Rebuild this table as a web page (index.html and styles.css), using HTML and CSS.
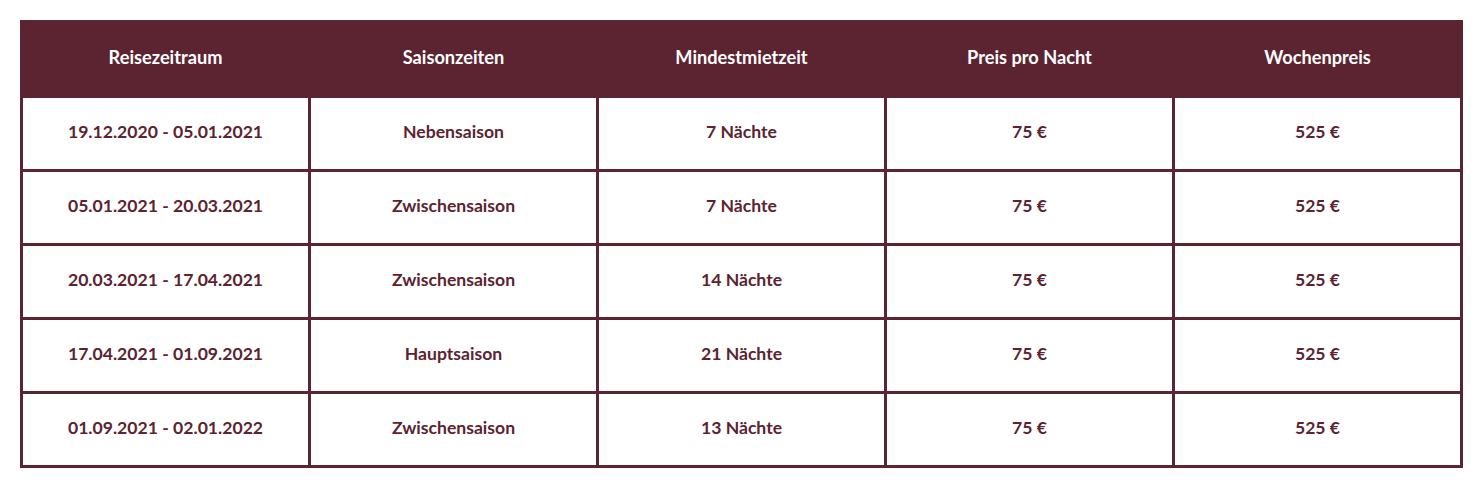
FILE: index.html
```html
<!DOCTYPE html>
<html lang="de">
<head>
<meta charset="utf-8">
<title>Preise</title>
<link rel="stylesheet" href="styles.css">
</head>
<body>
<table class="prices">
  <thead>
    <tr>
      <th>Reisezeitraum</th>
      <th>Saisonzeiten</th>
      <th>Mindestmietzeit</th>
      <th>Preis pro Nacht</th>
      <th>Wochenpreis</th>
    </tr>
  </thead>
  <tbody>
    <tr><td>19.12.2020 - 05.01.2021</td><td>Nebensaison</td><td>7 Nächte</td><td>75 €</td><td>525 €</td></tr>
    <tr><td>05.01.2021 - 20.03.2021</td><td>Zwischensaison</td><td>7 Nächte</td><td>75 €</td><td>525 €</td></tr>
    <tr><td>20.03.2021 - 17.04.2021</td><td>Zwischensaison</td><td>14 Nächte</td><td>75 €</td><td>525 €</td></tr>
    <tr><td>17.04.2021 - 01.09.2021</td><td>Hauptsaison</td><td>21 Nächte</td><td>75 €</td><td>525 €</td></tr>
    <tr><td>01.09.2021 - 02.01.2022</td><td>Zwischensaison</td><td>13 Nächte</td><td>75 €</td><td>525 €</td></tr>
  </tbody>
</table>
</body>
</html>
```
FILE: styles.css
```css
html, body {
  margin: 0;
  padding: 0;
  background: #ffffff;
}
body {
  padding: 20px;
  font-family: Lato, "Liberation Sans", sans-serif;
}
.prices {
  width: 100%;
  border-collapse: collapse;
  table-layout: fixed;
  border: 3px solid #5c2331;
}
.prices th,
.prices td {
  text-align: center;
  vertical-align: middle;
  font-weight: 700;
  line-height: 20px;
  padding: 0 0 4px 0;
}
.prices th {
  background: #5c2331;
  color: #ffffff;
  font-size: 18.2px;
  height: 68px;
  border: 3px solid #5c2331;
}
.prices td {
  color: #5c2331;
  font-size: 17.6px;
  height: 67px;
  border: 3px solid #5c2331;
}
```
